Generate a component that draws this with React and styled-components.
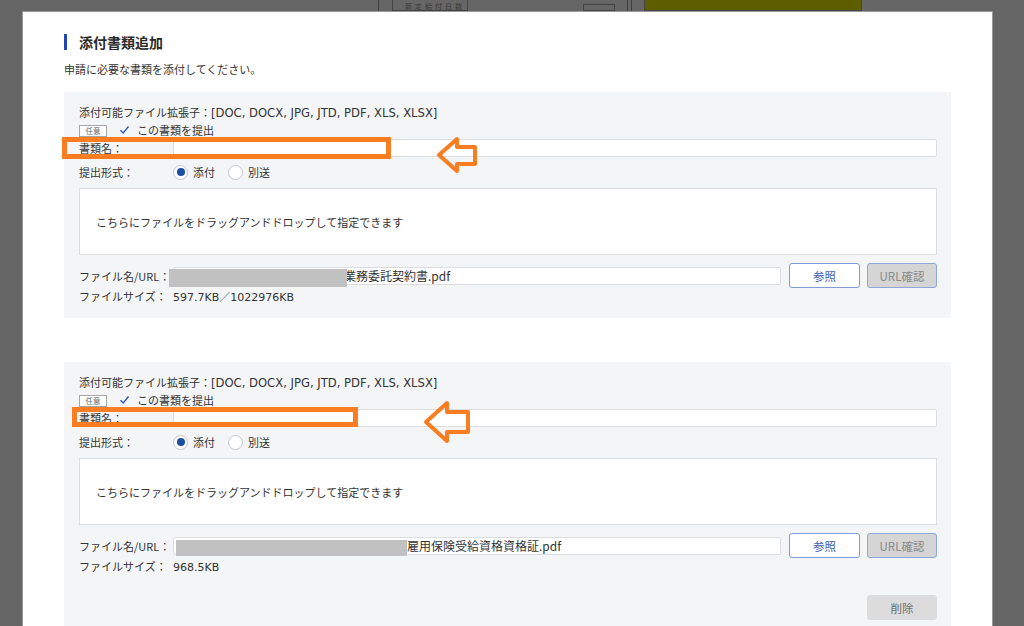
import React from "react";
import styled, { createGlobalStyle } from "styled-components";

const Global = createGlobalStyle`
  html, body { margin: 0; padding: 0; }
  body {
    background: #666666;
    font-family: "Noto Sans CJK JP", "Noto Sans", sans-serif;
    color: #333;
    overflow: hidden;
  }
`;

const Screen = styled.div`
  width: 1024px;
  height: 626px;
  overflow: hidden;
  display: flex;
  flex-direction: column;
`;

/* faded page content behind the modal overlay */
const BehindStrip = styled.div`
  height: 11px;
  flex-shrink: 0;
  display: flex;
  align-items: stretch;
`;
const BLine = styled.div`
  width: 1px;
  margin-left: ${(p) => p.$ml}px;
  background: #3e3e3e;
`;
const BBox = styled.div`
  margin-left: ${(p) => p.$ml}px;
  width: ${(p) => p.$w}px;
  margin-top: ${(p) => p.$mt || 0}px;
  border: 1px solid #444;
  border-top: ${(p) => (p.$mt ? "1px solid #444" : "none")};
  background: ${(p) => p.$bg || "transparent"};
  box-sizing: border-box;
  font-size: 7px;
  line-height: 7px;
  color: #3a3a3a;
  overflow: hidden;
  padding: 3px 0 0 12px;
  letter-spacing: 3px;
  white-space: nowrap;
`;

const Modal = styled.div`
  margin-left: 22px;
  width: 971px;
  flex: 1;
  box-sizing: border-box;
  background: #fff;
  border: 1px solid #9a9a9a;
  border-bottom: none;
  padding: 22px 41px 0 41px;
`;

const TitleRow = styled.div`
  display: flex;
  align-items: center;
  height: 16px;
  gap: 12px;
`;
const TitleBar = styled.div`
  width: 3px;
  height: 16px;
  background: #2148b0;
`;
const Title = styled.h2`
  margin: 0;
  font-size: 14px;
  font-weight: 700;
  color: #2a2a2a;
  line-height: 16px;
`;
const Lead = styled.p`
  margin: 11px 0 0 0;
  font-size: 11px;
  line-height: 16px;
  color: #333;
`;

const Panel = styled.section`
  margin-top: ${(p) => p.$mt}px;
  background: #f4f5f7;
  padding: 12px 14px 14px 15px;
`;

const Line = styled.div`
  height: 16px;
  font-size: 11px;
  line-height: 16px;
  color: #333;
  white-space: nowrap;
`;

/* Latin runs are set in a wider face, as in the original UI font */
const Latin = styled.span`
  font-family: "DejaVu Sans", "Noto Sans CJK JP", sans-serif;
  font-size: ${(p) => p.$fs || 11}px;
`;

const CheckRow = styled.div`
  margin-top: 1px;
  height: 18px;
  display: flex;
  align-items: center;
  font-size: 11px;
  color: #333;
`;
const Badge = styled.span`
  width: 28px;
  height: 12px;
  box-sizing: border-box;
  border: 1px solid #a5a5a5;
  background: #fff;
  font-size: 7.5px;
  line-height: 10px;
  color: #666;
  text-align: center;
  margin-top: 2px;
`;
const CheckBox = styled.span`
  width: 14px;
  height: 14px;
  margin-left: 10px;
  margin-right: 6px;
  display: flex;
  align-items: center;
  justify-content: center;
`;

const FieldRow = styled.div`
  position: relative;
  margin-top: ${(p) => p.$mt || 0}px;
  height: ${(p) => p.$h || 18}px;
  display: flex;
  align-items: center;
`;
const Label = styled.span`
  width: 94px;
  flex-shrink: 0;
  font-size: 11px;
  line-height: 16px;
  color: #333;
  white-space: nowrap;
`;
const TextInput = styled.div`
  position: relative;
  flex: 1;
  height: ${(p) => p.$h || 18}px;
  box-sizing: border-box;
  background: #fff;
  border: 1px solid #dcdde0;
  border-radius: 2px;
  font-size: 12px;
  line-height: 16px;
  color: #333;
  padding-left: ${(p) => p.$pl || 4}px;
  white-space: nowrap;
`;
const Redaction = styled.span`
  position: absolute;
  left: ${(p) => p.$l}px;
  top: ${(p) => p.$t}px;
  width: ${(p) => p.$w}px;
  height: ${(p) => p.$h}px;
  background: #c1c1c1;
`;

const RadioOption = styled.label`
  display: flex;
  align-items: center;
  gap: 5px;
  margin-right: 13px;
  font-size: 11px;
  color: #333;
`;
const RadioCircle = styled.span`
  width: 15px;
  height: 15px;
  box-sizing: border-box;
  border-radius: 50%;
  border: 1px solid #c4c6cc;
  background: #fff;
  display: flex;
  align-items: center;
  justify-content: center;
  &::after {
    content: "";
    width: 8px;
    height: 8px;
    border-radius: 50%;
    background: ${(p) => (p.$on ? "#1c4ea4" : "transparent")};
  }
`;

const DropZone = styled.div`
  margin-top: 7px;
  height: 67px;
  box-sizing: border-box;
  background: #fff;
  border: 1px solid #dcdde0;
  display: flex;
  align-items: center;
  padding-left: 16px;
  font-size: 11px;
  color: #333;
`;

const Button = styled.button`
  flex-shrink: 0;
  width: ${(p) => p.$w}px;
  height: 25px;
  margin-left: ${(p) => p.$ml || 0}px;
  box-sizing: border-box;
  border-radius: 3px;
  font-family: inherit;
  font-size: 11.5px;
  padding: 0;
  cursor: pointer;
  background: ${(p) =>
    p.$kind === "primary" ? "#fff" : p.$kind === "disabled" ? "#d5d5d6" : "#dcdcdd"};
  border: 1px solid
    ${(p) =>
      p.$kind === "primary" ? "#7f9cd9" : p.$kind === "disabled" ? "#8ea6da" : "#dcdcdd"};
  color: ${(p) =>
    p.$kind === "primary" ? "#3d60b6" : p.$kind === "disabled" ? "#8a8a8a" : "#6f6f6f"};
`;

const ActionRow = styled.div`
  margin-top: 21px;
  display: flex;
  justify-content: flex-end;
`;

/* orange annotation markup drawn over the form */
const Mark = styled.svg`
  position: absolute;
  left: ${(p) => p.$l}px;
  top: ${(p) => p.$t}px;
  overflow: visible;
  pointer-events: none;
`;

const ORANGE = "#fa7d22";

function RectMark({ l, t, w, h }) {
  return (
    <Mark $l={l} $t={t} width={w} height={h}>
      <rect x="2.5" y="2.5" width={w - 5} height={h - 5} fill="none" stroke={ORANGE} strokeWidth="5" />
    </Mark>
  );
}

function ArrowMark({ l, t, w, h }) {
  const hx = Math.round(w * 0.5);
  const ty1 = Math.round(h * 0.27);
  const ty2 = Math.round(h * 0.74);
  const pts = `2,${h / 2} ${hx},2 ${hx},${ty1} ${w - 2},${ty1} ${w - 2},${ty2} ${hx},${ty2} ${hx},${h - 2}`;
  return (
    <Mark $l={l} $t={t} width={w} height={h}>
      <polygon points={pts} fill="none" stroke={ORANGE} strokeWidth="4" strokeLinejoin="round" />
    </Mark>
  );
}

const Check = () => (
  <svg width="11" height="10" viewBox="0 0 11 10">
    <path d="M1.5 5.2 L4.2 8 L9.5 1.5" fill="none" stroke="#3658b4" strokeWidth="1.4" />
  </svg>
);

function DocPanel({ mt, fileName, size, red, textPl, rect, arrow, deletable }) {
  return (
    <Panel $mt={mt}>
      <Line>
        添付可能ファイル拡張子：<Latin $fs={11.6}>[DOC, DOCX, JPG, JTD, PDF, XLS, XLSX]</Latin>
      </Line>
      <CheckRow>
        <Badge>任意</Badge>
        <CheckBox>
          <Check />
        </CheckBox>
        この書類を提出
      </CheckRow>
      <FieldRow>
        <Label>書類名：</Label>
        <TextInput />
        <RectMark {...rect} />
        <ArrowMark {...arrow} />
      </FieldRow>
      <FieldRow $mt={6}>
        <Label>提出形式：</Label>
        <RadioOption>
          <RadioCircle $on />
          添付
        </RadioOption>
        <RadioOption>
          <RadioCircle />
          別送
        </RadioOption>
      </FieldRow>
      <DropZone>こちらにファイルをドラッグアンドドロップして指定できます</DropZone>
      <FieldRow $mt={8} $h={25}>
        <Label>ファイル名/URL：</Label>
        <TextInput $pl={textPl}>
          <Redaction $l={red.l} $t={red.t} $w={red.w} $h={red.h} />
          {fileName}
        </TextInput>
        <Button $w={71} $ml={8} $kind="primary">参照</Button>
        <Button $w={70} $ml={7} $kind="disabled">URL確認</Button>
      </FieldRow>
      <FieldRow $h={16}>
        <Label>ファイルサイズ：</Label>
        <Line>
          <Latin>{size}</Latin>
        </Line>
      </FieldRow>
      {deletable && (
        <ActionRow>
          <Button $w={70} $kind="plain">削除</Button>
        </ActionRow>
      )}
    </Panel>
  );
}

export default function App() {
  return (
    <>
      <Global />
      <Screen>
        <BehindStrip>
          <BLine $ml={378} />
          <BBox $ml={13} $w={76}>新定給付日数</BBox>
          <BBox $ml={115} $w={32} $mt={4} />
          <BLine $ml={12} />
          <BLine $ml={3} />
          <BBox $ml={12} $w={218} $bg="#5e5e00" />
        </BehindStrip>
        <Modal>
          <TitleRow>
            <TitleBar />
            <Title>添付書類追加</Title>
          </TitleRow>
          <Lead>申請に必要な書類を添付してください。</Lead>
          <DocPanel
            mt={15}
            fileName="業務委託契約書.pdf"
            size="597.7KB／1022976KB"
            red={{ l: -5, t: 1, w: 178, h: 18 }}
            textPl={170}
            rect={{ l: -17, t: -2, w: 329, h: 22 }}
            arrow={{ l: 358, t: -2, w: 40, h: 36 }}
          />
          <DocPanel
            mt={44}
            fileName="雇用保険受給資格資格証.pdf"
            size="968.5KB"
            red={{ l: 2, t: 2, w: 231, h: 16 }}
            textPl={233}
            rect={{ l: -7, t: -2, w: 286, h: 20 }}
            arrow={{ l: 345, t: -8, w: 46, h: 42 }}
            deletable
          />
        </Modal>
      </Screen>
    </>
  );
}
